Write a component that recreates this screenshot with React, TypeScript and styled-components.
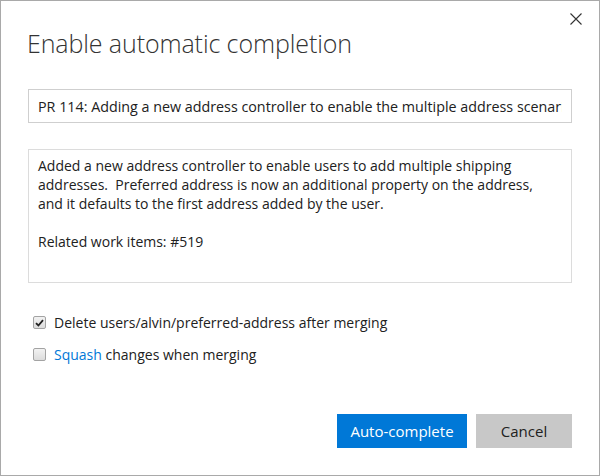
import React from "react";
import styled, { createGlobalStyle } from "styled-components";

const GlobalStyle = createGlobalStyle`
  html, body {
    margin: 0;
    padding: 0;
    background: #ffffff;
  }
  * {
    box-sizing: border-box;
  }
`;

const Dialog = styled.div`
  width: 600px;
  height: 476px;
  border: 1px solid #a9a9a9;
  background: #ffffff;
  padding: 0 27px;
  display: flex;
  flex-direction: column;
  font-family: "Open Sans", "Liberation Sans", sans-serif;
  color: #212121;
`;

const Header = styled.div`
  display: flex;
  justify-content: space-between;
  align-items: flex-start;
`;

const Title = styled.h1`
  margin: 24px 0 0 -1px;
  font-size: 25px;
  font-weight: 300;
  letter-spacing: -0.1px;
  color: #333333;
  line-height: 36px;
`;

const CloseButton = styled.button`
  margin: 10px -12px 0 0;
  width: 16px;
  height: 16px;
  padding: 0;
  border: none;
  background: transparent;
  display: flex;
  align-items: center;
  justify-content: center;
  cursor: pointer;
`;

const TitleInput = styled.input`
  margin-top: 28px;
  width: 100%;
  height: 34px;
  border: 1px solid #cfcfcf;
  padding: 0 9px;
  font-family: inherit;
  font-size: 14.3px;
  color: #212121;
  outline: none;
`;

const Description = styled.textarea`
  margin-top: 26px;
  width: 100%;
  height: 134px;
  border: 1px solid #dcdcdc;
  padding: 6px 9px;
  font-family: inherit;
  font-size: 14px;
  line-height: 19px;
  color: #212121;
  resize: none;
  outline: none;
  overflow: hidden;
`;

const Options = styled.div`
  margin-top: 30px;
  display: flex;
  flex-direction: column;
  gap: 13px;
  padding-left: 5px;
`;

const OptionRow = styled.label`
  display: flex;
  align-items: center;
  gap: 8px;
  font-size: 14px;
  line-height: 19px;
  color: #212121;
`;

const Box = styled.span`
  width: 13px;
  height: 13px;
  border: 1px solid #a3a3a3;
  border-radius: 2px;
  background: linear-gradient(#f2f2f2, #dcdcdc);
  display: flex;
  align-items: center;
  justify-content: center;
`;

const Link = styled.a`
  color: #0078d7;
  text-decoration: none;
`;

const Footer = styled.div`
  margin-top: auto;
  margin-bottom: 27px;
  display: flex;
  justify-content: flex-end;
  gap: 9px;
`;

const Button = styled.button<{ $primary?: boolean }>`
  height: 34px;
  width: ${(p) => (p.$primary ? "130px" : "96px")};
  border: none;
  font-family: inherit;
  font-size: 15px;
  background: ${(p) => (p.$primary ? "#0078d7" : "#c8c8c8")};
  color: ${(p) => (p.$primary ? "#ffffff" : "#212121")};
  cursor: pointer;
`;

function Checkbox({ checked }: { checked?: boolean }) {
  return (
    <Box>
      {checked && (
        <svg width="9" height="8" viewBox="0 0 9 8">
          <path d="M1 4.2 L3.4 6.5 L8 1.2" fill="none" stroke="#222" strokeWidth="1.8" />
        </svg>
      )}
    </Box>
  );
}

const description =
  "Added a new address controller to enable users to add multiple shipping\n" +
  "addresses.  Preferred address is now an additional property on the address,\n" +
  "and it defaults to the first address added by the user.\n\nRelated work items: #519";

export default function App() {
  return (
    <>
      <GlobalStyle />
      <Dialog>
        <Header>
          <Title>Enable automatic completion</Title>
          <CloseButton aria-label="Close">
            <svg width="12" height="12" viewBox="0 0 12 12">
              <path d="M0.5 0.5 L11.5 11.5 M11.5 0.5 L0.5 11.5" stroke="#333" strokeWidth="1.1" />
            </svg>
          </CloseButton>
        </Header>
        <TitleInput
          readOnly
          value="PR 114: Adding a new address controller to enable the multiple address scenario"
        />
        <Description readOnly value={description} />
        <Options>
          <OptionRow>
            <Checkbox checked />
            Delete users/alvin/preferred-address after merging
          </OptionRow>
          <OptionRow>
            <Checkbox />
            <span>
              <Link href="#">Squash</Link> changes when merging
            </span>
          </OptionRow>
        </Options>
        <Footer>
          <Button $primary>Auto-complete</Button>
          <Button>Cancel</Button>
        </Footer>
      </Dialog>
    </>
  );
}
